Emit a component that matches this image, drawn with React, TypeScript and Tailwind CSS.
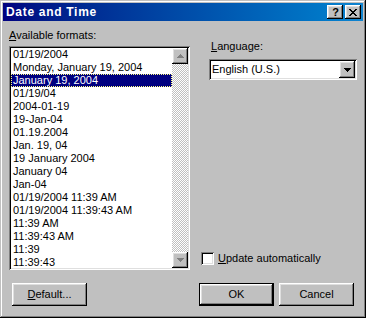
const formats = [
  "01/19/2004",
  "Monday, January 19, 2004",
  "January 19, 2004",
  "01/19/04",
  "2004-01-19",
  "19-Jan-04",
  "01.19.2004",
  "Jan. 19, 04",
  "19 January 2004",
  "January 04",
  "Jan-04",
  "01/19/2004 11:39 AM",
  "01/19/2004 11:39:43 AM",
  "11:39 AM",
  "11:39:43 AM",
  "11:39",
  "11:39:43",
];

const raised =
  "bg-[#c0c0c0] shadow-[inset_-1px_-1px_#000,inset_1px_1px_#fff,inset_-2px_-2px_#808080,inset_2px_2px_#dfdfdf]";
const sunken =
  "shadow-[inset_1px_1px_#808080,inset_-1px_-1px_#fff,inset_2px_2px_#000,inset_-2px_-2px_#dfdfdf]";

function Arrow({ down, color }: { down?: boolean; color: string }) {
  return (
    <svg width="7" height="4" viewBox="0 0 7 4" shapeRendering="crispEdges">
      {down ? (
        <path d="M0 0h7v1H0zM1 1h5v1H1zM2 2h3v1H2zM3 3h1v1H3z" fill={color} />
      ) : (
        <path d="M3 0h1v1H3zM2 1h3v1H2zM1 2h5v1H1zM0 3h7v1H0z" fill={color} />
      )}
    </svg>
  );
}

export default function App() {
  return (
    <div className="w-[366px] h-[318px] bg-[#c0c0c0] p-[3px] flex flex-col font-['Liberation_Sans',Arial,sans-serif] text-[11px] text-black shadow-[inset_-1px_-1px_#000,inset_1px_1px_#c0c0c0,inset_-2px_-2px_#808080,inset_2px_2px_#fff]">
      {/* title bar */}
      <div className="h-[18px] flex items-center pl-[3px] pr-[2px] bg-linear-to-r from-[#000080] to-[#1084d0]">
        <span className="text-white font-bold text-[12px] tracking-[0.7px] leading-[18px]">
          Date and Time
        </span>
        <div className="ml-auto flex gap-[2px]">
          <div className={`w-[16px] h-[14px] flex items-center justify-center ${raised}`}>
            <span className="font-bold text-[11px] leading-none pl-[1px]">?</span>
          </div>
          <div className={`w-[16px] h-[14px] flex items-center justify-center ${raised}`}>
            <svg width="8" height="7" viewBox="0 0 8 7" shapeRendering="crispEdges">
              <path
                d="M0 0h2v1H0zM6 0h2v1H6zM1 1h2v1H1zM5 1h2v1H5zM2 2h4v1H2zM3 3h2v1H3zM2 4h4v1H2zM1 5h2v1H1zM5 5h2v1H5zM0 6h2v1H0zM6 6h2v1H6z"
                fill="#000"
              />
            </svg>
          </div>
        </div>
      </div>

      <div className="flex-1 flex flex-col">
        <div className="flex">
          {/* left column */}
          <div className="ml-[6px] w-[181px] flex flex-col">
            <div className="mt-[8px] h-[13px] leading-[13px]">
              <span className="underline">A</span>vailable formats:
            </div>
            <div className={`mt-[4px] h-[224px] bg-white p-[2px] flex ${sunken}`}>
              <div className="flex-1 overflow-hidden">
                {formats.map((f, i) => (
                  <div
                    key={i}
                    className={
                      i === 2
                        ? "h-[13px] leading-[11px] pl-[1px] bg-[#000080] text-white border border-dotted border-[#ffff80] whitespace-nowrap"
                        : "h-[13px] leading-[13px] pl-[2px] whitespace-nowrap"
                    }
                  >
                    {f}
                  </div>
                ))}
              </div>
              <div className="w-[16px] flex flex-col">
                <div className={`h-[16px] flex items-center justify-center ${raised}`}>
                  <Arrow color="#808080" />
                </div>
                <div className="flex-1 bg-[repeating-conic-gradient(#c0c0c0_0%_25%,#fff_0%_50%)] bg-[length:2px_2px]" />
                <div className={`h-[16px] flex items-center justify-center ${raised}`}>
                  <Arrow down color="#808080" />
                </div>
              </div>
            </div>
          </div>

          {/* right column */}
          <div className="flex-1 flex flex-col">
            <div className="ml-[21px] mt-[19px] h-[13px] leading-[13px]">
              <span className="underline">L</span>anguage:
            </div>
            <div className={`ml-[19px] mt-[6px] w-[148px] h-[21px] bg-white p-[2px] flex ${sunken}`}>
              <div className="flex-1 pl-[1px] leading-[17px]">English (U.S.)</div>
              <div className={`w-[16px] h-[17px] flex items-center justify-center ${raised}`}>
                <Arrow down color="#000" />
              </div>
            </div>
            <div className="mt-auto mb-[5px] ml-[11px] flex items-center gap-[4px]">
              <div className={`w-[13px] h-[13px] bg-white ${sunken}`} />
              <span className="leading-[13px]">
                <span className="underline">U</span>pdate automatically
              </span>
            </div>
          </div>
        </div>

        {/* buttons */}
        <div className="mt-[13px] flex">
          <button className={`ml-[9px] w-[75px] h-[23px] flex items-center justify-center ${raised}`}>
            <span>
              <span className="underline">D</span>efault...
            </span>
          </button>
          <button className="ml-auto w-[75px] h-[23px] border border-black bg-[#c0c0c0] shadow-[inset_-1px_-1px_#000,inset_1px_1px_#fff,inset_-2px_-2px_#808080,inset_2px_2px_#dfdfdf] flex items-center justify-center">
            OK
          </button>
          <button className={`ml-[5px] mr-[9px] w-[75px] h-[23px] flex items-center justify-center ${raised}`}>
            Cancel
          </button>
        </div>
      </div>
    </div>
  );
}
